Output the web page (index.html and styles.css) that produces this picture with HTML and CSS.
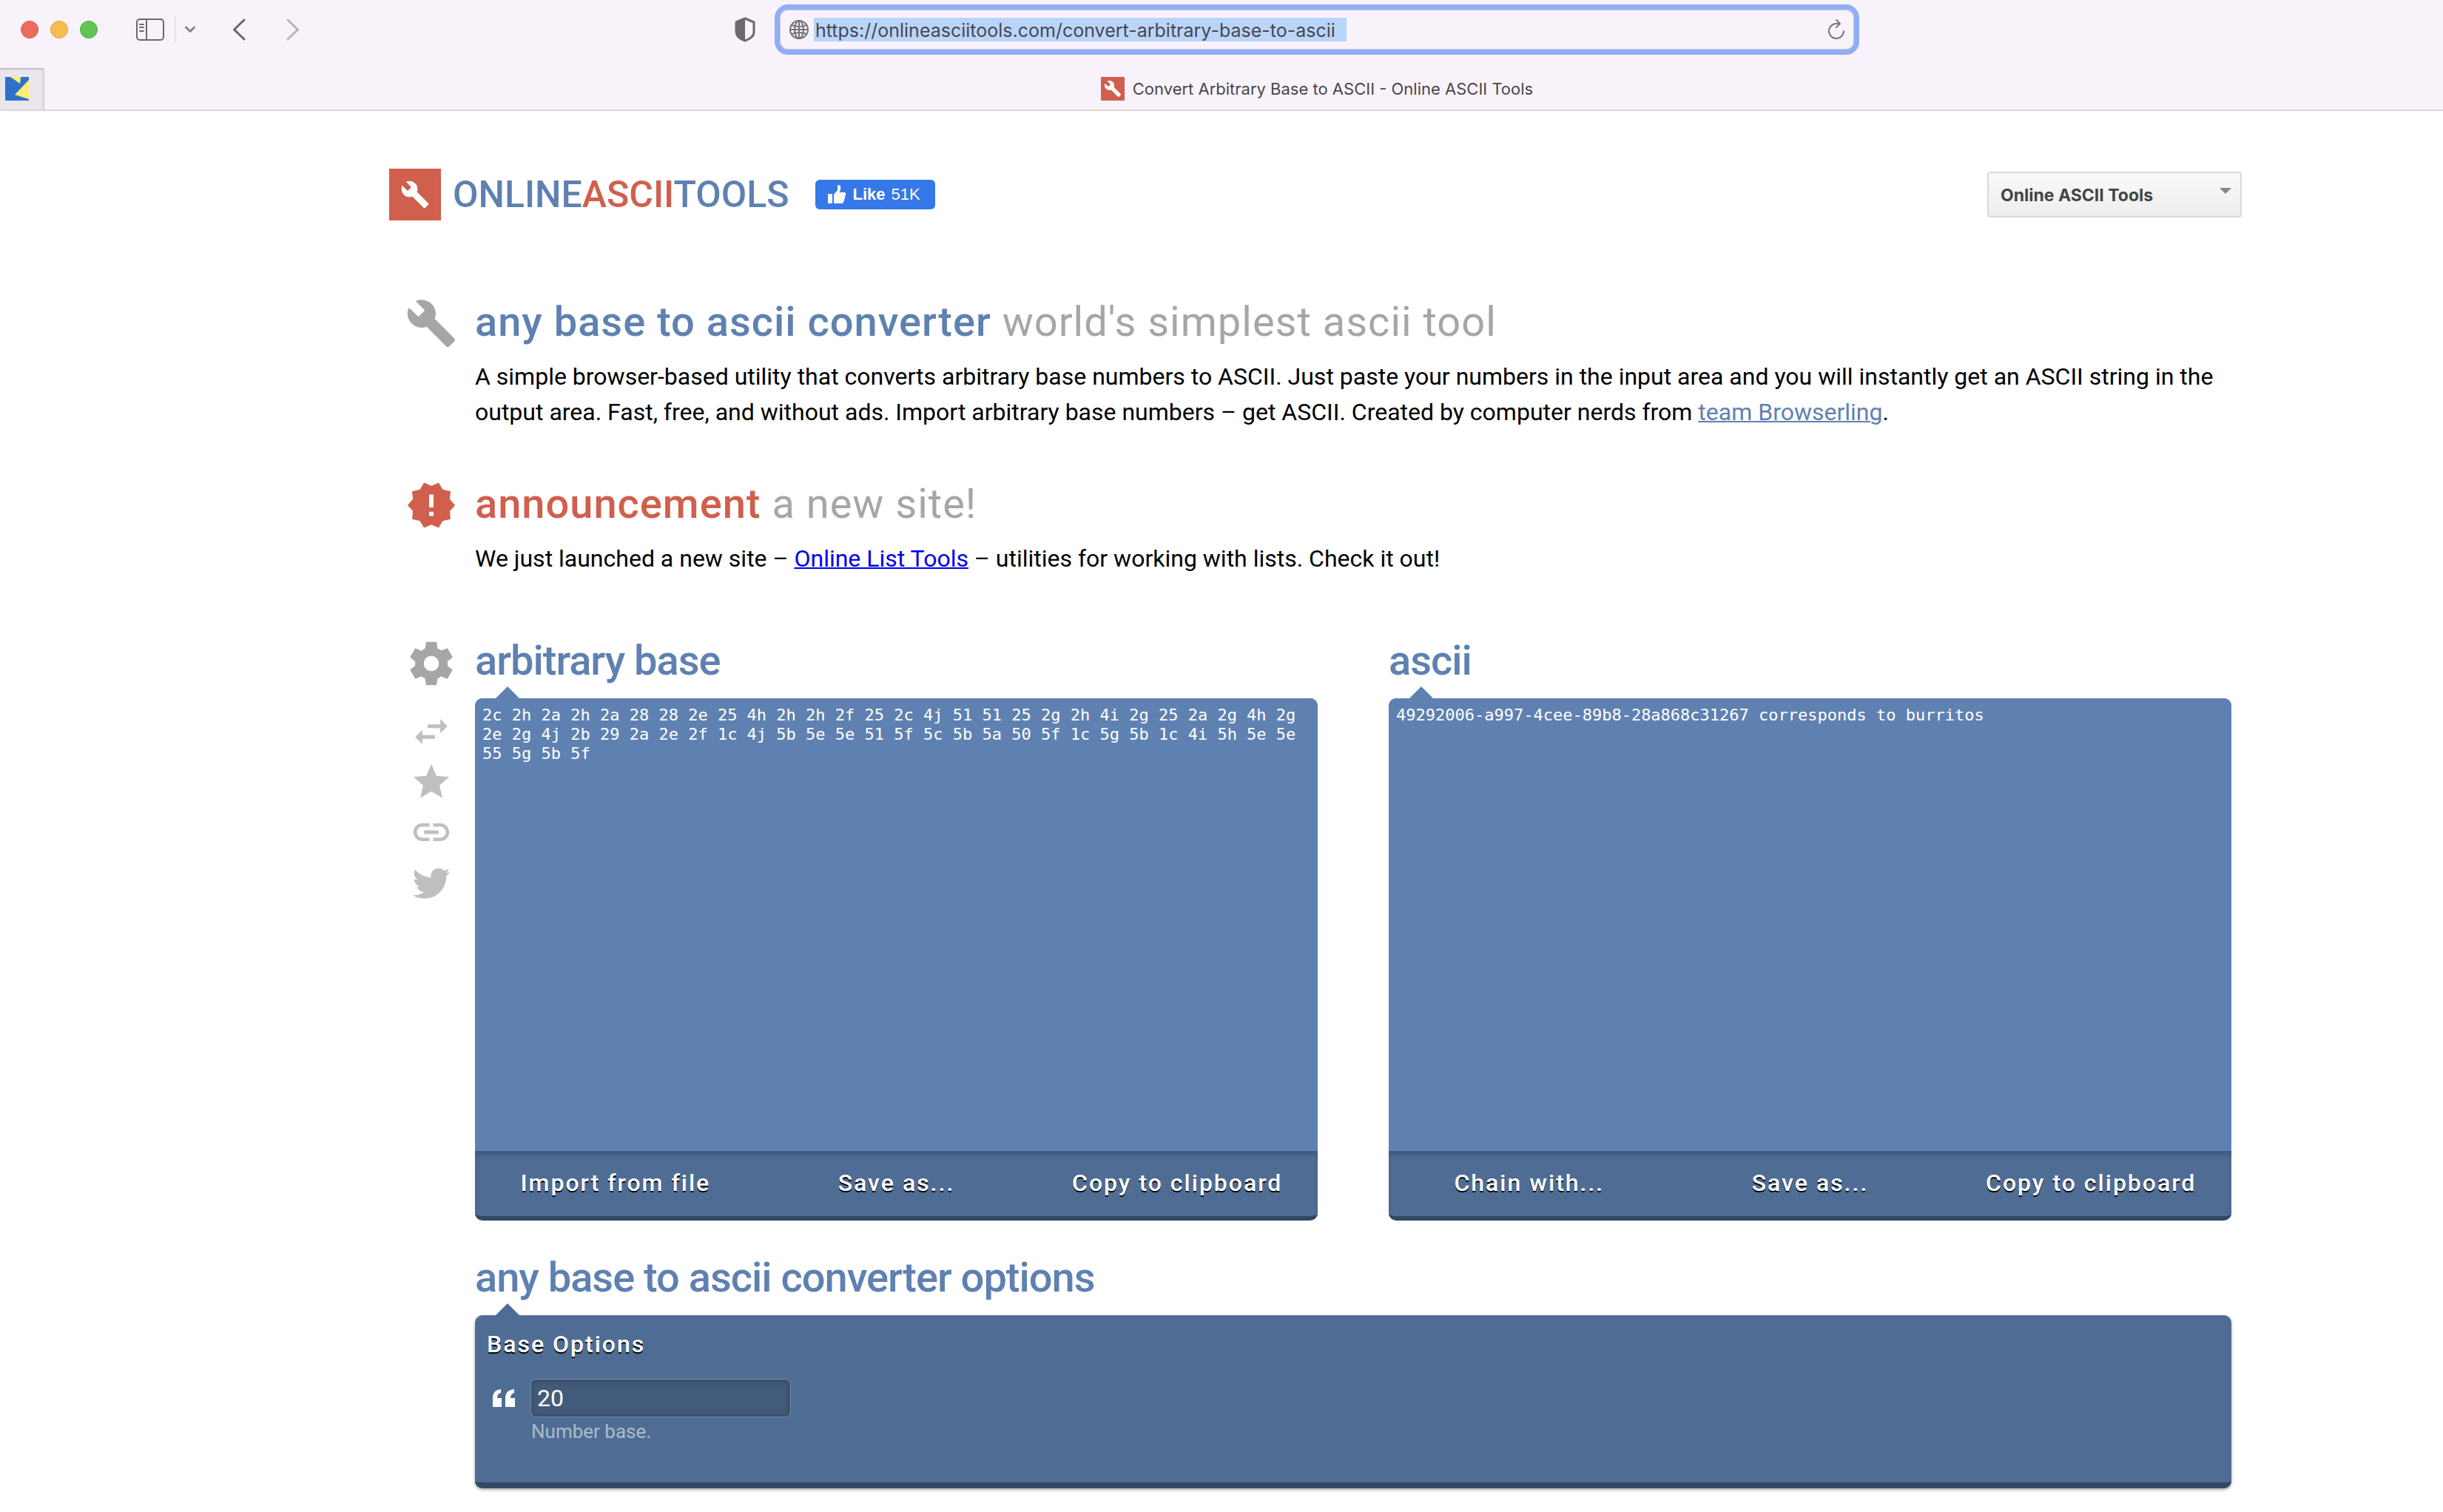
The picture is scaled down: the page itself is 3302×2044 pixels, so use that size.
FILE: index.html
```html
<!DOCTYPE html>
<html lang="en">
<head>
<meta charset="utf-8">
<title>Convert Arbitrary Base to ASCII - Online ASCII Tools</title>
<link rel="stylesheet" href="styles.css">
</head>
<body>
<svg class="defs" aria-hidden="true">
  <symbol id="wrench" viewBox="0 0 24 24"><path d="M22.7 19l-9.1-9.1c.9-2.3.4-5-1.5-6.9-2-2-5-2.4-7.4-1.3L9 6 6 9 1.6 4.7C.4 7.1.9 10.1 2.9 12.1c1.9 1.9 4.6 2.4 6.9 1.5l9.1 9.1c.4.4 1 .4 1.4 0l2.3-2.3c.5-.4.5-1.1.1-1.4z"/></symbol>
</svg>

<header class="browser">
  <div class="toolbar">
    <div class="toolbar-left">
      <div class="lights"><span class="light red"></span><span class="light yellow"></span><span class="light green"></span></div>
      <button class="bare sidebar-btn" aria-label="Sidebar"><svg width="40" height="32" viewBox="0 0 40 32" fill="none" stroke="#6e676e" stroke-width="2"><rect x="2" y="2" width="36" height="28" rx="4"/><path d="M15 2v28M6 9h5M6 13h5M6 18h5" stroke-linecap="round"/></svg></button>
      <span class="divider"></span>
      <button class="bare menu-btn" aria-label="Tab groups"><svg width="16" height="12" viewBox="0 0 16 12" fill="none" stroke="#87818b" stroke-width="3" stroke-linecap="round" stroke-linejoin="round"><path d="M2.500 3l5.500 5.500L13.500 3"/></svg></button>
      <button class="bare back-btn" aria-label="Back"><svg width="18" height="30" viewBox="0 0 18 30" fill="none" stroke="#6a636b" stroke-width="3" stroke-linecap="round" stroke-linejoin="round"><path d="M16 2L2.500 15 16 28"/></svg></button>
      <button class="bare" aria-label="Forward"><svg width="18" height="30" viewBox="0 0 18 30" fill="none" stroke="#b9b3bb" stroke-width="3" stroke-linecap="round" stroke-linejoin="round"><path d="M2 2l13.500 13L2 28"/></svg></button>
    </div>
    <button class="bare shield" aria-label="Privacy report"><svg width="28" height="34" viewBox="0 0 28 34"><path d="M14 2L26 7v13c0 6-6 10-12 12C8 30 2 26 2 20V7z" fill="none" stroke="#6e676e" stroke-width="3" stroke-linejoin="round"/><path d="M14 2L2 7v13c0 6 6 10 12 12z" fill="#6e676e"/></svg></button>
    <div class="address">
      <svg width="28" height="28" viewBox="0 0 28 28" fill="none" stroke="#77727a" stroke-width="2"><circle cx="14" cy="14" r="12"/><ellipse cx="14" cy="14" rx="6" ry="12"/><path d="M14 2v24M2 14h24M4 8q10 4 20 0M4 20q10-4 20 0"/></svg>
      <input type="text" aria-label="Address" value="https://onlineasciitools.com/convert-arbitrary-base-to-ascii">
      <button class="bare reload" aria-label="Reload"><svg width="24" height="28" viewBox="0 0 24 28" fill="none" stroke="#7b767e" stroke-width="2" stroke-linecap="round" stroke-linejoin="round"><path d="M22 16A10 10 0 1 1 12 6h5M12 1l5 5-5 5"/></svg></button>
    </div>
  </div>
  <div class="tabs">
    <a class="pinned" href="#" aria-label="Pinned tab"><svg width="32" height="32" viewBox="0 0 32 32"><path fill="#2d72ca" d="M0 0h32v32H0z"/><path fill="#fdee73" d="M7 0h14l-1 9zM32 4v26l-19-6z"/></svg></a>
    <div class="tab"><span class="favicon"><svg width="24" height="24"><use href="#wrench"/></svg></span><span>Convert Arbitrary Base to ASCII - Online ASCII Tools</span></div>
  </div>
</header>

<div class="page">
  <div class="site-head">
    <a class="logo" href="#"><span class="logo-mark"><svg width="40" height="40"><use href="#wrench"/></svg></span><span>ONLINE<b>ASCII</b>TOOLS</span></a>
    <button class="like"><svg width="26" height="26" viewBox="0 0 26 26" fill="#fff"><rect x="1" y="12" width="6" height="13" rx="1"/><path d="M9 13l5-6V2q0-2 2-2 3 1 2 6l-1 4h6q3 0 2 3 0 2-1 2 1 3-1 4 1 3-1 3 0 3-2 3h-9q-1 0-2-1z"/></svg><b>Like</b><span>51K</span></button>
    <div class="picker">
      <select aria-label="Tool collection"><option>Online ASCII Tools</option></select>
      <svg width="16" height="8" viewBox="0 0 16 8"><path d="M0 0h16L8 8z" fill="#858585"/></svg>
    </div>
  </div>

  <main>
    <section class="row intro">
      <svg class="icon-lg"><use href="#wrench"/></svg>
      <div>
        <h1>any base to ascii converter <small>world's simplest ascii tool</small></h1>
        <p>A simple browser-based utility that converts arbitrary base numbers to ASCII. Just paste your numbers in the input area and you will instantly get an ASCII string in the output area. Fast, free, and without ads. Import arbitrary base numbers – get ASCII. Created by computer nerds from <a class="team" href="#">team Browserling</a>.</p>
      </div>
    </section>

    <section class="row news">
      <svg class="icon-lg alert" viewBox="0 0 24 24"><path d="M23 12l-2.440-2.780.340-3.680-3.610-.820-1.890-3.180L12 3 8.600 1.540 6.710 4.720l-3.610.810.340 3.680L1 12l2.440 2.780-.340 3.690 3.610.820 1.890 3.180L12 21l3.400 1.460 1.890-3.180 3.610-.820-.340-3.680L23 12zm-10 5h-2v-2h2v2zm0-4h-2V7h2v6z"/></svg>
      <div>
        <h2 class="spaced alert">announcement <small>a new site!</small></h2>
        <p>We just launched a new site – <a href="#">Online List Tools</a> – utilities for working with lists. Check it out!</p>
      </div>
    </section>

    <section class="row tool">
      <div class="rail">
        <svg class="icon-lg" viewBox="0 0 24 24"><path d="M19.440 12.990l.010-.020c.040-.320.080-.640.080-.990 0-.340-.030-.660-.070-.990l.010.020 2.440-1.920-2.430-4.220-2.870 1.160.010.010c-.520-.400-1.090-.740-1.710-1h.010L14.440 2H9.570l-.440 3.070h.010c-.620.260-1.190.600-1.710 1l.010-.010-2.880-1.170-2.440 4.220 2.440 1.920.010-.020c-.040.330-.070.650-.070.990 0 .350.030.670.080.990l-.010-.020-2.100 1.650-.330.260 2.430 4.200 2.880-1.150-.020-.040c.530.410 1.100.750 1.730 1.010h-.030L9.580 22h4.850l.440-3.070h-.010c.620-.260 1.200-.600 1.730-1.010l-.020.040 2.880 1.150 2.430-4.200-.330-.260-2.110-1.660zM12 15.500c-1.930 0-3.500-1.570-3.500-3.500s1.570-3.500 3.500-3.500 3.500 1.570 3.500 3.500-1.570 3.500-3.500 3.500z"/></svg>
        <div class="actions">
          <button class="bare" aria-label="Swap"><svg viewBox="0 0 24 24"><path d="M6.990 11L3 15l3.990 4v-3H14v-2H6.990v-3zM21 9l-3.990-4v3H10v2h7.010v3L21 9z"/></svg></button>
          <button class="bare" aria-label="Favorite"><svg viewBox="0 0 24 24"><path d="M12 17.270L18.180 21l-1.640-7.030L22 9.240l-7.190-.610L12 2 9.190 8.630 2 9.240l5.460 4.730L5.820 21z"/></svg></button>
          <button class="bare" aria-label="Link"><svg viewBox="0 0 24 24"><path d="M3.900 12c0-1.710 1.390-3.100 3.100-3.100h4V7H7c-2.760 0-5 2.240-5 5s2.240 5 5 5h4v-1.900H7c-1.710 0-3.100-1.390-3.100-3.100zM8 13h8v-2H8v2zm9-6h-4v1.900h4c1.710 0 3.100 1.390 3.100 3.100s-1.390 3.100-3.100 3.100h-4V17h4c2.760 0 5-2.240 5-5s-2.240-5-5-5z"/></svg></button>
          <button class="bare" aria-label="Tweet"><svg viewBox="0 0 24 24"><path d="M22.460 6c-.770.350-1.600.580-2.460.690.880-.530 1.560-1.370 1.880-2.380-.830.500-1.750.850-2.720 1.050C18.370 4.500 17.260 4 16 4c-2.350 0-4.270 1.920-4.270 4.290 0 .340.040.670.110.980C8.280 9.090 5.110 7.380 3 4.790c-.370.630-.580 1.370-.580 2.150 0 1.490.750 2.810 1.910 3.560-.710 0-1.370-.200-1.950-.500v.030c0 2.080 1.480 3.820 3.440 4.210a4.220 4.220 0 0 1-1.930.070 4.280 4.280 0 0 0 4 2.980 8.521 8.521 0 0 1-5.330 1.840c-.340 0-.680-.020-1.020-.060C3.440 20.290 5.700 21 8.120 21 16 21 20.330 14.460 20.330 8.790c0-.190 0-.370-.010-.560.840-.600 1.560-1.360 2.140-2.230z"/></svg></button>
        </div>
      </div>
      <div>
        <div class="sides">
          <div>
            <h2><label for="from">arbitrary base</label></h2>
            <div class="panel">
              <textarea id="from" spellcheck="false">2c 2h 2a 2h 2a 28 28 2e 25 4h 2h 2h 2f 25 2c 4j 51 51 25 2g 2h 4i 2g 25 2a 2g 4h 2g 2e 2g 4j 2b 29 2a 2e 2f 1c 4j 5b 5e 5e 51 5f 5c 5b 5a 50 5f 1c 5g 5b 1c 4i 5h 5e 5e 55 5g 5b 5f</textarea>
              <div class="panel-actions"><button>Import from file</button><button>Save as...</button><button>Copy to clipboard</button></div>
            </div>
          </div>
          <div>
            <h2><label for="to">ascii</label></h2>
            <div class="panel">
              <textarea id="to" spellcheck="false" readonly>49292006-a997-4cee-89b8-28a868c31267 corresponds to burritos</textarea>
              <div class="panel-actions"><button>Chain with...</button><button>Save as...</button><button>Copy to clipboard</button></div>
            </div>
          </div>
        </div>
        <h2>any base to ascii converter options</h2>
        <div class="panel options">
          <h3>Base Options</h3>
          <div class="option">
            <svg width="30" height="24" viewBox="0 0 30 24" fill="#fff"><path d="M0 24V12Q0 1 11 0v5q-5 1-5 7h6v12zM17 24V12Q17 1 29 0v5q-5 1-5 7h6v12z"/></svg>
            <input id="base" type="text" value="20">
            <label for="base">Number base.</label>
          </div>
        </div>
      </div>
    </section>
  </main>
</div>
</body>
</html>
```
FILE: styles.css
```css
* { box-sizing: border-box; }

body {
  margin: 0;
  background: #fff;
  color: #000;
  font: 32px/48px Roboto, sans-serif;
}

h1, h2, h3, p { margin: 0; }
svg { display: block; flex: none; }
.defs { position: absolute; width: 0; height: 0; }

button, input, select, textarea {
  margin: 0;
  border: 0;
  outline: 0;
  color: inherit;
  font: inherit;
  letter-spacing: inherit;
}

.bare { display: block; flex: none; padding: 0; background: none; }

/* Browser window */
.browser {
  background: #f8f3fa;
  border-bottom: 2px solid #dad6da;
  font-family: Inter, sans-serif;
}

.toolbar {
  display: grid;
  grid-template-columns: 993fr 28px 26fr 1466px 789fr;
  align-items: center;
  height: 80px;
}

.toolbar-left { display: flex; align-items: center; padding-left: 28px; }
.lights { display: flex; gap: 16px; }
.light { width: 24px; height: 24px; border: 1px solid #d9574b; border-radius: 50%; background: #ee6a5f; }
.light.yellow { border-color: #d8a03b; background: #f5be4f; }
.light.green { border-color: #4fa73e; background: #61c554; }
.sidebar-btn { margin-left: 51px; }
.divider { width: 2px; height: 36px; margin: 0 11px 0 13px; background: #e6e1e8; }
.back-btn { margin: 0 55px 0 49px; }

.address {
  grid-column: 4;
  display: flex;
  align-items: center;
  height: 68px;
  padding: 0 12px;
  border: 7px solid #90aef5;
  border-radius: 18px;
  box-shadow: inset 0 0 0 1px #c9c8d6;
}

.address input {
  width: 720px;
  height: 32px;
  margin-left: 6px;
  padding: 2px 2px 0;
  background: #b9d5fb;
  color: #4a464c;
  font-size: 25px;
}

.reload { margin-left: auto; }

.tabs { display: flex; height: 68px; padding-top: 12px; }

.pinned {
  width: 60px;
  padding: 12px 0 0 7px;
  border-right: 2px solid #d3ced4;
  background: #ebe6ec;
  box-shadow: inset 0 3px 3px -2px #aaa4ab;
}

.tab {
  display: flex;
  flex: 1;
  align-items: center;
  justify-content: center;
  gap: 11px;
  padding-left: 198px;
  color: #4a464c;
  font-size: 22px;
}

.favicon, .logo-mark { display: grid; place-items: center; background: #d05f4d; fill: #fff; }
.favicon { width: 32px; height: 32px; }

/* Site header */
.page { padding: 78px 272px 33px 526px; }
.site-head { display: flex; align-items: center; margin-bottom: 104px; }

.logo {
  display: flex;
  align-items: center;
  gap: 16px;
  color: #5f81b1;
  font-size: 50px;
  font-weight: 500;
  text-decoration: none;
}

.logo b { color: #d05f4d; font-weight: inherit; }
.logo-mark { width: 70px; height: 70px; }

.like {
  display: flex;
  align-items: center;
  gap: 8px;
  height: 40px;
  margin-left: 36px;
  padding: 0 20px 0 16px;
  border-radius: 6px;
  background: #3578e9;
  color: #fff;
  font: 22px/24px "Liberation Sans", sans-serif;
}

.picker { position: relative; width: 344px; margin-left: auto; }

.picker select {
  display: block;
  width: 100%;
  height: 62px;
  padding: 2px 16px 0;
  border: 2px solid #d9d9d9;
  border-radius: 4px;
  appearance: none;
  background: linear-gradient(#f9f9f9, #eee);
  color: #444;
  font: 700 23px Inter, sans-serif;
}

.picker svg { position: absolute; top: 22px; right: 14px; pointer-events: none; }

/* Content rows: icon gutter and body */
.row {
  display: grid;
  grid-template-columns: 70px minmax(0, 1fr);
  gap: 24px;
  padding: 0 14px 0 22px;
}

.intro { margin-bottom: 67px; }
.news { margin-bottom: 81px; }
.icon-lg { width: 70px; height: 70px; fill: #a6a6a6; }
.icon-lg.alert { fill: #d05f4d; }

h1, h2 { color: #5f81b1; font-size: 56px; font-weight: 500; line-height: 66px; letter-spacing: -1px; }
h1, .spaced { margin-bottom: 17px; letter-spacing: 1px; }
h2.alert { color: #d05f4d; }
small { color: #a6a6a6; font-size: inherit; font-weight: 400; }
a { color: #00e; text-decoration-thickness: 2px; }
.team { color: #5f81b1; }

.rail .icon-lg { margin: 2px 0 28px; }
.actions { display: grid; justify-items: center; gap: 10px; }
.actions svg { width: 58px; height: 58px; fill: #bfbfbf; }

/* Panels */
.sides { display: grid; grid-template-columns: 1fr 1fr; gap: 96px; margin-bottom: 44px; }

.panel {
  position: relative;
  margin-top: 18px;
  border-bottom: 6px solid #344863;
  border-radius: 10px;
  background: #4f6d94;
  color: #fff;
}

.panel::before {
  content: "";
  position: absolute;
  top: -16px;
  left: 28px;
  border: 16px solid transparent;
  border-top: 0;
  border-bottom-color: #5f81b1;
}

.panel textarea {
  display: block;
  width: 100%;
  height: 612px;
  padding: 10px;
  border-radius: 10px 10px 0 0;
  background: #5f81b1;
  font: 22px/26px "DejaVu Sans Mono", monospace;
  overflow: hidden;
  resize: none;
}

.panel-actions {
  display: grid;
  grid-template-columns: repeat(3, 1fr);
  box-shadow: inset 0 8px 8px -4px #3d5371;
}

.panel-actions button {
  height: 88px;
  padding: 0 0 2px;
  background: none;
  font-weight: 500;
}

.panel-actions button, h3 { letter-spacing: 2px; text-shadow: 0 2px 0 #000; }

.options {
  padding: 15px 16px 49px;
  border-bottom-width: 8px;
  box-shadow: 0 2px 4px #0005;
}

.options::before { border-bottom-color: #4f6d94; }
h3 { font-size: 32px; font-weight: 500; }

.option {
  display: grid;
  grid-template-columns: 30px 350px;
  align-items: center;
  column-gap: 22px;
  margin-top: 24px;
  padding-left: 8px;
}

.option input {
  height: 50px;
  padding: 0 6px;
  border: 2px solid #3a4f6b;
  border-radius: 6px;
  background: #435b7a;
  box-shadow: 0 0 0 1px #7089ab, inset 0 0 8px #384d68;
}

.option label { grid-column: 2; color: #adbaca; font-size: 26px; line-height: 40px; }
```
